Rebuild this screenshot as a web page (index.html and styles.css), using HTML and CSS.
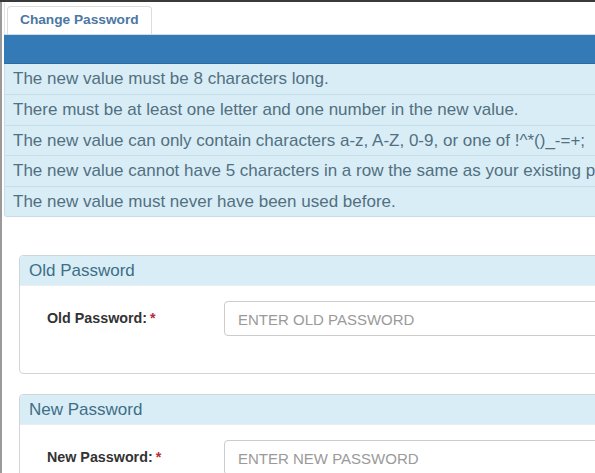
FILE: index.html
```html
<!DOCTYPE html>
<html>
<head>
<meta charset="utf-8">
<link rel="stylesheet" href="styles.css">
</head>
<body>
<div class="frame">
  <div class="tabs">
    <div class="tab">Change Password</div>
  </div>
  <div class="bar"></div>
  <div class="rules">
    <div class="rule">The new value must be 8 characters long.</div>
    <div class="rule">There must be at least one letter and one number in the new value.</div>
    <div class="rule">The new value can only contain characters a-z, A-Z, 0-9, or one of !^*()_-=+;</div>
    <div class="rule">The new value cannot have 5 characters in a row the same as your existing p</div>
    <div class="rule">The new value must never have been used before.</div>
  </div>
  <div class="content">
    <div class="panel">
      <div class="panel-head">Old Password</div>
      <div class="panel-body">
        <label class="label">Old Password:<span class="req">*</span></label>
        <div class="input">ENTER OLD PASSWORD</div>
      </div>
    </div>
    <div class="panel">
      <div class="panel-head">New Password</div>
      <div class="panel-body">
        <label class="label">New Password:<span class="req">*</span></label>
        <div class="input">ENTER NEW PASSWORD</div>
      </div>
    </div>
  </div>
</div>
</body>
</html>
```
FILE: styles.css
```css
html, body {
  margin: 0;
  padding: 0;
  background: #fff;
  overflow: hidden;
}
body {
  font-family: "Liberation Sans", Arial, sans-serif;
  width: 595px;
  height: 473px;
  border-top: 2px solid #3a3a3a;
  box-sizing: border-box;
}
.frame {
  border-left: 2px solid #9a9a9a;
  height: 100%;
  padding-left: 2px;
  box-sizing: border-box;
  width: 595px;
  overflow: hidden;
}
.tabs {
  display: flex;
  padding-left: 2px;
  padding-top: 4px;
  border-left: 1px solid #e4e4e4;
}
.tab {
  border: 1px solid #dcdcdc;
  border-bottom: none;
  border-radius: 4px 4px 0 0;
  padding: 0 11px 0 12px;
  height: 27px;
  line-height: 26px;
  font-size: 13.7px;
  font-weight: bold;
  color: #4a77a3;
  width: 120px;
}
.bar {
  height: 30px;
  background: #337ab7;
  border-top: 1px solid #cfdbe6;
  box-sizing: border-box;
  border-bottom: 1px solid #2d6a9f;
  width: 700px;
}
.rules {
  background: #d9edf7;
  border: 1px solid #c8dde8;
  border-top: none;
  border-radius: 0 0 3px 3px;
  width: 700px;
}
.rule {
  box-sizing: border-box;
  height: 30.5px;
  line-height: 29px;
  padding-left: 8px;
  font-size: 17px;
  color: #52707f;
  white-space: nowrap;
  border-top: 1px solid #c5dfea;
}
.rule:first-child {
  border-top: none;
  height: 30px;
}
.content {
  padding: 38px 0 0 15px;
}
.panel {
  border: 1px solid #cfd6da;
  border-radius: 4px;
  width: 700px;
  margin-bottom: 20px;
}
.panel-head {
  background: #d9edf7;
  height: 29px;
  line-height: 29px;
  padding-left: 9px;
  font-size: 17px;
  color: #3f6e86;
  border-radius: 4px 4px 0 0;
}
.panel-body {
  display: flex;
  align-items: flex-start;
  padding: 15px 0 37px 27px;
  border-top: 1px solid #e6eff4;
}
.label {
  width: 177px;
  font-size: 14.3px;
  font-weight: bold;
  color: #333;
  padding-top: 9px;
}
.req {
  color: #b52f36;
  margin-left: 3px;
}
.input {
  border: 1px solid #cccccc;
  border-radius: 4px;
  height: 35px;
  line-height: 35px;
  box-sizing: border-box;
  padding-left: 13px;
  font-size: 15px;
  color: #9a9a9a;
  width: 400px;
}
```
